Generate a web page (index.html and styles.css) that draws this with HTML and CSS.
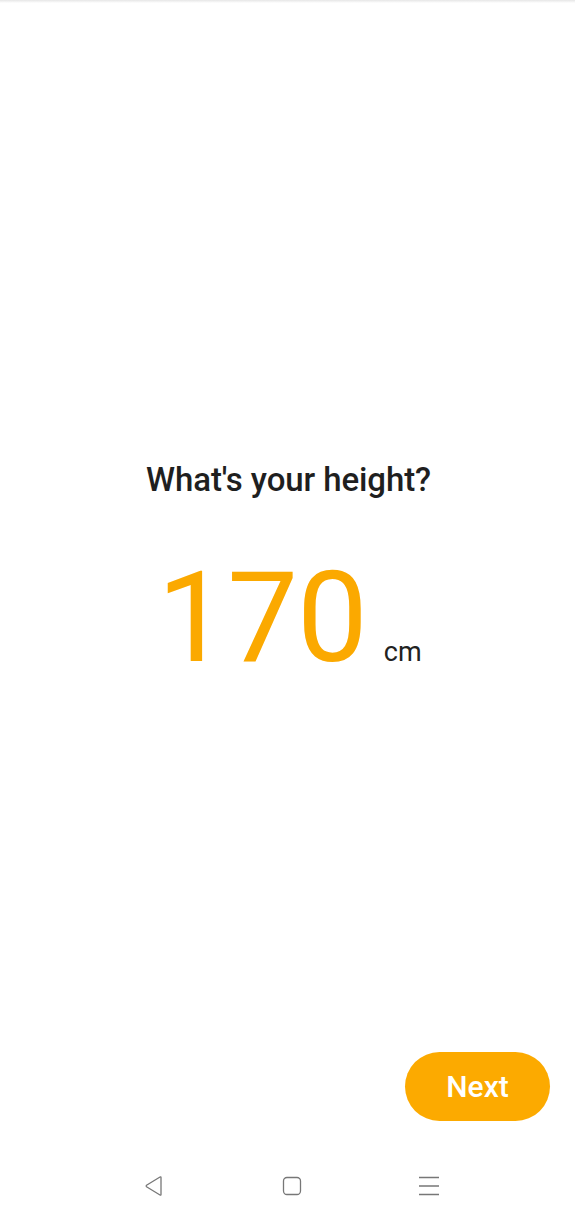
FILE: index.html
```html
<!DOCTYPE html>
<html lang="en">
<head>
<meta charset="utf-8">
<link rel="stylesheet" href="styles.css">
</head>
<body>
<div class="screen">
  <div class="topline"></div>
  <main class="content">
    <h1 class="question">What's your height?</h1>
    <div class="value-row">
      <span class="value">170</span>
      <span class="unit">cm</span>
    </div>
  </main>
  <div class="actions">
    <button class="next">Next</button>
  </div>
  <nav class="navbar">
    <svg class="nav-icon" width="22" height="22" viewBox="0 0 22 22"><path d="M18 2.5 L18 19.5 Q18 20.5 17 20 L3.5 11.8 Q2.8 11 3.5 10.2 L17 2 Q18 1.5 18 2.5 Z" fill="none" stroke="#777" stroke-width="1.3" stroke-linejoin="round"/></svg>
    <svg class="nav-icon" width="22" height="22" viewBox="0 0 22 22"><rect x="2.5" y="2.5" width="17" height="17" rx="3.5" fill="none" stroke="#777" stroke-width="1.3"/></svg>
    <svg class="nav-icon" width="22" height="22" viewBox="0 0 22 22"><path d="M1 2.5 H21 M1 11 H21 M1 19.5 H21" stroke="#777" stroke-width="1.3"/></svg>
  </nav>
</div>
</body>
</html>
```
FILE: styles.css
```css
* { box-sizing: border-box; }
html, body { margin: 0; padding: 0; background: #fff; }
body { font-family: Roboto, "Noto Sans", sans-serif; }
.screen {
  width: 575px;
  height: 1221px;
  display: flex;
  flex-direction: column;
  overflow: hidden;
}
.topline {
  height: 3px;
  background: linear-gradient(#e6e6e6, #fff);
}
.content {
  flex: 1;
  display: flex;
  flex-direction: column;
  align-items: center;
  padding-top: 457px;
}
.question {
  margin: 0;
  font-size: 33px;
  font-weight: 500;
  color: #1f1f1f;
  line-height: 40px;
  letter-spacing: -0.1px;
  padding-left: 2px;
}
.value-row {
  display: flex;
  align-items: baseline;
  gap: 17px;
  margin-top: 55px;
  padding-left: 4px;
}
.value {
  font-size: 126px;
  font-weight: 400;
  color: #fba900;
  line-height: 1;
  letter-spacing: -1px;
}
.unit {
  font-size: 27px;
  color: #222;
}
.actions {
  display: flex;
  justify-content: flex-end;
  padding-right: 25px;
  height: 109px;
}
.next {
  width: 145px;
  height: 69px;
  border: none;
  border-radius: 35px;
  background: #fcaa00;
  color: #fff;
  font-family: Roboto, sans-serif;
  font-size: 30px;
  font-weight: 500;
  padding: 0;
}
.navbar {
  height: 60px;
  display: flex;
  justify-content: space-between;
  padding: 14px 135px 0 143px;
  align-items: flex-start;
}
.nav-icon { display: block; }
```
